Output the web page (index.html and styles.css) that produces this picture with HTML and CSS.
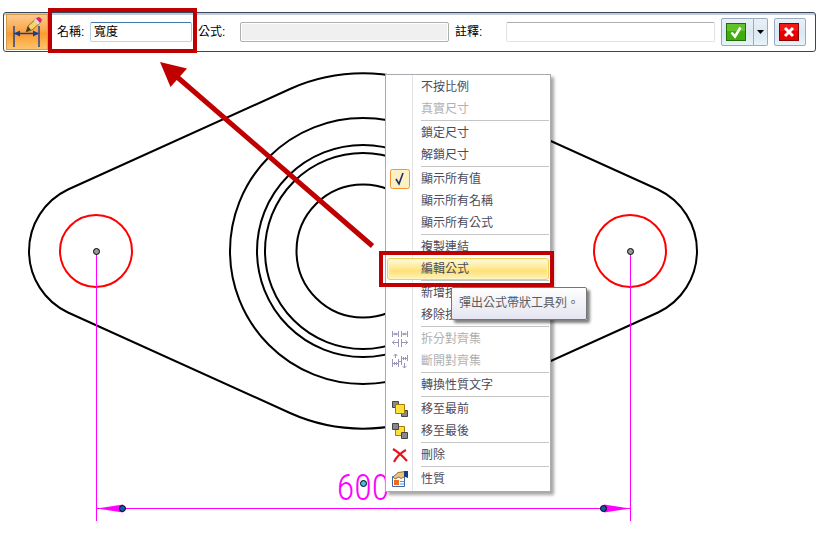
FILE: index.html
```html
<!DOCTYPE html>
<html lang="zh-Hant">
<head>
  <meta charset="UTF-8">
  <meta name="viewport" content="width=device-width, initial-scale=1.0">
  <title>公式</title>
  <link rel="stylesheet" href="styles.css">
</head>
<body>

<form class="ribbon">
  <button type="button" class="tool" aria-label="尺寸">
    <svg width="42" height="36" viewBox="0 0 42 36">
      <path d="M8 12v21M33 12v21M8 19.500h24" stroke="#1c3f8c" stroke-width="1.4" fill="none"/>
      <path d="M8 19.500l6-3v6zM33 19.500l-6-3v6z" fill="#1c3f8c"/>
      <path d="M20 18l2-6 9-8 4 4-9 8z" fill="#f3d36b" stroke="#7d5b16" stroke-width=".8"/>
      <path d="M20 18l2-6 3 4z" fill="#4a3a20"/>
      <path d="M28 6.500l3-2.500 4 4-3 2.500z" fill="#ddd"/>
      <path d="M30 4.500q3-3 5 0 2 2-1 4.500z" fill="#e0245e"/>
    </svg>
  </button>

  <div class="field name">
    <label for="name">名稱:</label>
    <input id="name" type="text" value="寬度">
  </div>
  <div class="field formula">
    <label for="formula">公式:</label>
    <input id="formula" type="text" disabled>
  </div>
  <div class="field comment">
    <label for="comment">註釋:</label>
    <input id="comment" type="text">
  </div>

  <div class="split">
    <button type="button" class="accept" aria-label="接受">
      <svg width="20" height="18" viewBox="0 0 20 18">
        <rect x=".5" y=".5" width="19" height="17" fill="#3fae0c" stroke="#23700a"/>
        <path d="M1 1h18v7H1z" fill="#62c22c"/>
        <path d="M5.500 9.500l3.500 4 5.500-9" fill="none" stroke="#fff" stroke-width="2.600"/>
      </svg>
    </button>
    <button type="button" class="more" aria-label="更多">
      <svg width="8" height="4" viewBox="0 0 8 4"><path d="M0 0h7L3.500 4z" fill="#000"/></svg>
    </button>
  </div>
  <button type="button" class="cancel" aria-label="取消">
    <svg width="20" height="18" viewBox="0 0 20 18">
      <rect x=".5" y=".5" width="19" height="17" fill="#e60000" stroke="#8c0000"/>
      <path d="M1 1h18v7H1z" fill="#f01818"/>
      <path d="M6 5l8 8M14 5l-8 8" stroke="#fff" stroke-width="3"/>
    </svg>
  </button>
</form>

<main class="canvas">
  <svg class="drawing">
    <!-- drawn in window coordinates, the ribbon takes the first 52px -->
    <g transform="translate(0 -52)" fill="none">
      <g stroke="#000" stroke-width="2">
        <path d="M68 189.500L290 89A178 178 0 0 1 436 89L658 189.500A68 68 0 0 1 658 312.500L436 413A178 178 0 0 1 290 413L68 312.500A68 68 0 0 1 68 189.500z"/>
        <circle cx="363" cy="251" r="133"/>
        <circle cx="363" cy="251" r="106"/>
        <circle cx="363" cy="251" r="98"/>
        <circle cx="363" cy="251" r="66.500"/>
      </g>
      <g stroke="#f00" stroke-width="2">
        <circle cx="96" cy="251" r="36"/>
        <circle cx="630" cy="251" r="36"/>
      </g>
      <g stroke="#f0f">
        <path d="M96.500 254v267M630.500 254v267M97 508.500h533"/>
        <path d="M97 508.500l26-4v8zM630 508.500l-26-4v8z" fill="#f0f" stroke="none"/>
      </g>
      <text class="dimension" x="363" y="500">600</text>
      <g stroke="#000">
        <circle cx="96.500" cy="251.500" r="3" fill="#999"/>
        <circle cx="630.500" cy="251.500" r="3" fill="#999"/>
        <circle cx="363.500" cy="483.500" r="3" fill="#4ab8e8"/>
        <circle cx="122.500" cy="508.500" r="3" fill="#0b5cad"/>
        <circle cx="603.500" cy="508.500" r="3" fill="#0b5cad"/>
      </g>
      <path d="M372.500 246L176 76" stroke="#c00000" stroke-width="5"/>
      <path d="M160 62l27 6.500-16.500 18.500z" fill="#c00000"/>
    </g>
  </svg>

  <div class="menu" role="menu">
    <button role="menuitem">不按比例</button>
    <button role="menuitem" disabled>真實尺寸</button>
    <hr>
    <button role="menuitem">鎖定尺寸</button>
    <button role="menuitem">解鎖尺寸</button>
    <hr>
    <button role="menuitemcheckbox" aria-checked="true">
      <svg class="checked" width="20" height="20" viewBox="0 0 20 20">
        <rect x=".5" y=".5" width="19" height="19" rx="2" fill="#fcf1c2" stroke="#f29536"/>
        <path d="M6 10l3 5 4-11" fill="none" stroke="#20286e" stroke-width="1.600"/>
      </svg>顯示所有值
    </button>
    <button role="menuitem">顯示所有名稱</button>
    <button role="menuitem">顯示所有公式</button>
    <hr>
    <button role="menuitem">複製連結</button>
    <button role="menuitem" class="active">編輯公式</button>
    <hr>
    <button role="menuitem">新增按鈕</button>
    <button role="menuitem">移除按鈕將它顯示</button>
    <hr>
    <button role="menuitem" disabled>
      <svg width="16" height="18" viewBox="0 0 16 18" fill="none" stroke="#9a98b8">
        <path d="M.5 1v6M6.500 1v6M9.500 1v6M15.500 1v6M1 4h5M10 4h5M2 3l3 2M5 3l-3 2M11 3l3 2M14 3l-3 2M6.500 9v8M9.500 9v8M0 12.500h6M10 12.500h6M2.500 10.500l-2 2 2 2M13.500 10.500l2 2-2 2"/>
      </svg>拆分對齊集
    </button>
    <button role="menuitem" disabled>
      <svg width="16" height="18" viewBox="0 0 16 18" fill="none" stroke="#9a98b8">
        <path d="M.5 7v8M6.500 7v8M1 11.500h5M2 10l3 3M5 10l-3 3M9.500 4v9M15.500 3v6M10 6.500h5M11 5l3 3M14 5l-3 3M6.500 9.500h3M3.500 6V2M1.500 4l2-2 2 2M12.500 11v5M10.500 14l2 2 2-2"/>
      </svg>斷開對齊集
    </button>
    <hr>
    <button role="menuitem">轉換性質文字</button>
    <hr>
    <button role="menuitem">
      <svg width="16" height="16" viewBox="0 0 16 16">
        <path d="M.5.500h6v6h-6zM9.500 9.500h6v6h-6z" fill="#888" stroke="#444"/>
        <path d="M3.500 3.500h9v9h-9z" fill="#ffe03a" stroke="#a87800"/>
      </svg>移至最前
    </button>
    <button role="menuitem">
      <svg width="16" height="16" viewBox="0 0 16 16">
        <path d="M3.500 3.500h9v9h-9z" fill="#ffe03a" stroke="#a87800"/>
        <path d="M.5.500h6v6h-6zM9.500 9.500h6v6h-6z" fill="#888" stroke="#444"/>
      </svg>移至最後
    </button>
    <hr>
    <button role="menuitem">
      <svg width="16" height="16" viewBox="0 0 16 16">
        <path d="M1 2q7 4 14 12M14 3Q6 7 2 15" fill="none" stroke="#e8131b" stroke-width="2.200"/>
      </svg>刪除
    </button>
    <hr>
    <button role="menuitem">
      <svg width="16" height="16" viewBox="0 0 16 16">
        <path d="M.5 5.500h12v10H.5z" fill="#fff" stroke="#3c66a8"/>
        <path d="M2 9h5v5H2z" fill="#ef6a1e"/>
        <path d="M8 10.500h4M8 13h4" stroke="#3aa0dc"/>
        <path d="M1 6l5-4.500 7-1v5l-4 2-2-1.500-4 2z" fill="#e8c283" stroke="#7a5220" stroke-width=".8"/>
        <path d="M12 0h4v7l-4-1.500z" fill="#173e7c"/>
      </svg>性質
    </button>
  </div>

  <div class="tooltip" role="tooltip">彈出公式帶狀工具列。</div>
</main>

</body>
</html>
```
FILE: styles.css
```css
* {
  box-sizing: border-box;
}

body {
  display: flex;
  flex-direction: column;
  min-height: 100vh;
  margin: 0;
  background: #fff;
  font-family: "Liberation Sans", "Noto Sans CJK TC", sans-serif;
  font-size: 12px;
}

button, input {
  font: inherit;
  margin: 0;
}

button {
  padding: 0;
}

svg {
  display: block;
}

/* ribbon */

.ribbon {
  display: flex;
  align-items: center;
  gap: 6px;
  height: 40px;
  margin: 12px 7px 0 3px;
  padding: 0 9px 0 2px;
  border: 1px solid #34495e;
  border-radius: 3px;
  box-shadow: inset 0 2px #c6cad8;
}

.tool {
  width: 42px;
  height: 36px;
  border: 1px solid #d39a50;
  background: linear-gradient(#fcc98c, #fba84c 45%, #fb9a30 55%, #ffc46a);
}

.tool svg {
  margin: -1px;
}

.field {
  display: flex;
  align-items: center;
}

.field label {
  flex: none;
  padding-bottom: 3px;
}

.field input {
  flex: 1;
  min-width: 0;
  height: 20px;
  padding: 0 3px 3px;
  border: 1px solid #dfe2ea;
  border-top-color: #abadb3;
  border-radius: 2px;
  background: #fff;
}

.name {
  position: relative;
  margin-left: 3px;
}

.name label {
  width: 33px;
}

.name input {
  flex: none;
  width: 102px;
  border-color: #3d7bad #a4c9e3 #b7d9ed #b5cfe7;
}

/* red frame round the name field */
.name::after {
  content: "";
  position: absolute;
  inset: -14px -5px -11px -9px;
  border: 4px solid #c00000;
  pointer-events: none;
}

.formula, .comment {
  flex: 1 1 251px;
}

.comment {
  flex-basis: 260px;
}

.formula label {
  width: 42px;
}

.comment label {
  width: 51px;
}

.formula input:disabled {
  border-color: #afafaf;
  background: #f0f0f0;
  box-shadow: inset 0 0 0 1px #fff;
}

.split {
  display: flex;
}

.accept, .more, .cancel {
  display: flex;
  align-items: center;
  width: 32px;
  height: 28px;
  padding-left: 4px;
  border: 1px solid #9aa9c4;
  border-radius: 2px;
  background: linear-gradient(#e9f0f6, #dce8f2 50%, #e6f3f8);
}

.accept {
  width: 33px;
  border-radius: 2px 0 0 2px;
}

.more {
  width: 14px;
  padding-left: 3px;
  border-left: 0;
  border-radius: 0 2px 2px 0;
}

/* drawing */

.canvas {
  position: relative;
  flex: 1;
  min-height: 486px;
}

.drawing {
  width: 100%;
  height: 486px;
}

.dimension {
  font-family: "Liberation Sans Narrow", "Roboto Condensed", Lato, sans-serif;
  font-size: 36px;
  font-weight: 300;
  text-anchor: middle;
  fill: #f0f;
}

/* context menu */

.menu {
  position: absolute;
  left: 385px;
  top: 22px;
  width: 166px;
  padding: 1px 0;
  border: 1px solid #a7abb0;
  background: linear-gradient(90deg, #fff 26px, #e2e4e7 26px, #e2e4e7 27px, #fff 27px);
  box-shadow: 3px 3px 3px rgba(0, 0, 0, .35);
}

.menu button {
  position: relative;
  display: flex;
  align-items: center;
  width: 100%;
  height: 22px;
  padding: 0 0 3px 35px;
  border: 0;
  background: none;
  color: #4b4b5b;
}

.menu button:disabled {
  color: #b0b0b0;
}

.menu button svg {
  width: 16px;
  margin: 0 13px -3px -29px;
}

.menu button .checked {
  width: 20px;
  margin: 0 11px -3px -31px;
}

.menu hr {
  height: 2px;
  margin: 0 1px 0 35px;
  border: 0;
  border-top: 1px solid #c5c5c5;
}

.menu .active {
  width: calc(100% - 2px);
  margin: 0 1px;
  padding-left: 33px;
  border: 1px solid #f0cf57;
  border-radius: 3px;
  background: linear-gradient(#fffae0, #ffe992 45%, #ffe07a 60%, #fff3b8);
  box-shadow: inset 0 0 0 1px #fff6c8;
}

.menu .active::after {
  content: "";
  position: absolute;
  inset: -8px -6px -8px -9px;
  border: 4px solid #c00000;
}

.tooltip {
  position: absolute;
  left: 451px;
  top: 235px;
  padding: 7px;
  border: 1px solid #767676;
  border-radius: 2px;
  background: linear-gradient(#fff, #e4e5f0);
  box-shadow: 3px 3px 3px rgba(0, 0, 0, .5);
  color: #5c5c5c;
  line-height: 17px;
}
```
